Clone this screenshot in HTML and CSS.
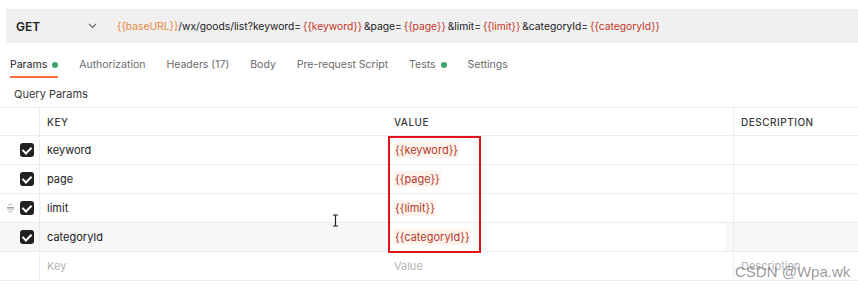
FILE: index.html
```html
<!DOCTYPE html>
<html lang="en">
<head>
    <meta charset="UTF-8">
    <title>Params</title>
    <link rel="stylesheet" href="styles.css">
</head>
<body>
    <div class="url-bar">
        <div class="method">
            <span>GET</span>
            <svg class="chevron" width="9" height="6" viewBox="0 0 9 6"><path d="M1 1l3.5 3.5L8 1" fill="none" stroke="#6b6b6b" stroke-width="1.1"/></svg>
        </div>
        <div class="url">
            <span class="var-base">{{baseURL}}</span>/wx/goods/list?keyword= <span class="var">{{keyword}}</span> &amp;page= <span class="var">{{page}}</span> &amp;limit= <span class="var">{{limit}}</span> &amp;categoryId= <span class="var">{{categoryId}}</span>
        </div>
    </div>

    <div class="tabs">
        <div class="tab active">Params <i class="dot"></i></div>
        <div class="tab">Authorization</div>
        <div class="tab">Headers (17)</div>
        <div class="tab">Body</div>
        <div class="tab">Pre-request Script</div>
        <div class="tab">Tests <i class="dot"></i></div>
        <div class="tab">Settings</div>
    </div>

    <div class="section-title">Query Params</div>

    <div class="params">
        <div class="row head">
            <div class="cell check"></div>
            <div class="cell key">KEY</div>
            <div class="cell value">VALUE</div>
            <div class="cell desc">DESCRIPTION</div>
        </div>
        <div class="row">
            <div class="cell check"><span class="box"></span></div>
            <div class="cell key">keyword</div>
            <div class="cell value"><span class="pill">{{keyword}}</span></div>
            <div class="cell desc"></div>
        </div>
        <div class="row">
            <div class="cell check"><span class="box"></span></div>
            <div class="cell key">page</div>
            <div class="cell value"><span class="pill">{{page}}</span></div>
            <div class="cell desc"></div>
        </div>
        <div class="row">
            <div class="cell check">
                <svg class="handle" width="9" height="10" viewBox="0 0 9 10"><path d="M1 4.5h7M1 6h7M2.5 2.5L4.5 1l2 1.5M2.5 8L4.5 9.5l2-1.5" fill="none" stroke="#9a9a9a" stroke-width="0.9"/></svg>
                <span class="box"></span>
            </div>
            <div class="cell key">limit</div>
            <div class="cell value"><span class="pill">{{limit}}</span></div>
            <div class="cell desc"></div>
        </div>
        <div class="row hover">
            <div class="cell check"><span class="box"></span></div>
            <div class="cell key">categoryId</div>
            <div class="cell value editing"><span class="pill">{{categoryId}}</span></div>
            <div class="cell desc"></div>
        </div>
        <div class="row">
            <div class="cell check"></div>
            <div class="cell key placeholder">Key</div>
            <div class="cell value placeholder">Value</div>
            <div class="cell desc placeholder">Description</div>
        </div>
        <div class="mark"></div>
        <svg class="ibeam" width="7" height="13" viewBox="0 0 7 13"><path d="M1 1h5M1 12h5M3.5 1v11" fill="none" stroke="#222" stroke-width="1.2"/></svg>
    </div>

    <div class="watermark">CSDN @Wpa.wk</div>
</body>
</html>
```

FILE: styles.css
```css
* { box-sizing: border-box; }
body {
    margin: 0;
    width: 858px;
    height: 287px;
    overflow: hidden;
    background: #ffffff;
    font-family: Inter, "Liberation Sans", sans-serif;
    color: #212121;
    position: relative;
}

.url-bar {
    display: flex;
    align-items: center;
    height: 34px;
    margin: 9px 0 0 6px;
    background: #f0f0f0;
}
.method {
    display: flex;
    align-items: center;
    justify-content: space-between;
    width: 99px;
    padding-left: 10px;
    font-size: 12px;
    font-weight: 600;
}
.chevron { margin-right: 8px; }
.url {
    padding-left: 12px;
    font-size: 10.3px;
    color: #212121;
    white-space: nowrap;
    word-spacing: -1px;
}
.url .var-base { color: #e8863b; }
.url .var { color: #c4362a; }

.tabs {
    display: flex;
    height: 35px;
    padding-left: 10px;
    gap: 21px;
}
.tab {
    position: relative;
    display: flex;
    align-items: center;
    height: 35px;
    padding-top: 8px;
    font-size: 10.5px;
    color: #6b6b6b;
}
.tab.active { color: #212121; }
.tab.active::after {
    content: "";
    position: absolute;
    left: 0;
    right: 0;
    bottom: 0;
    height: 2px;
    background: #ff6c37;
}
.dot {
    width: 6px;
    height: 6px;
    margin-left: 5px;
    border-radius: 50%;
    background: #3ea56a;
}

.section-title {
    padding: 9px 0 0 14px;
    height: 27px;
    font-size: 11px;
    color: #3a3a3a;
}

.params {
    position: relative;
    margin-top: 2px;
    border-top: 1px solid #f0f0f0;
}
.row {
    display: grid;
    grid-template-columns: 39px 347px 347px 1fr;
    height: 29px;
    border-bottom: 1px solid #ececec;
}
.row.head { height: 28px; }
.row.hover { background: #f7f7f7; }
.cell {
    display: flex;
    align-items: center;
    padding-left: 7px;
    font-size: 11px;
    border-left: 1px solid #ededed;
}
.cell.check {
    border-left: none;
    padding-left: 0;
    justify-content: flex-end;
    padding-right: 5px;
    gap: 5px;
}
.head .cell {
    font-size: 10px;
    letter-spacing: 0.5px;
    color: #3a3a3a;
    font-weight: 500;
}
.cell.value { border-left-color: transparent; }
.cell.value.editing { background: #ffffff; margin-right: 7px; }
.placeholder { color: #b3b3b3; }

.box {
    position: relative;
    width: 14px;
    height: 14px;
    border-radius: 3px;
    background: #212121;
}
.box::after {
    content: "";
    position: absolute;
    left: 4px;
    top: 2px;
    width: 4px;
    height: 7px;
    border: solid #ffffff;
    border-width: 0 2px 2px 0;
    transform: rotate(45deg);
}

.pill {
    padding: 1px 1px;
    border-radius: 2px;
    background: #fdf3ed;
    color: #b23a2c;
}

.mark {
    position: absolute;
    left: 388px;
    top: 28px;
    width: 93px;
    height: 117px;
    border: 2px solid #e3131b;
}
.ibeam {
    position: absolute;
    left: 332px;
    top: 106px;
}
.watermark {
    position: absolute;
    left: 735px;
    top: 263px;
    font-family: "Liberation Sans", sans-serif;
    font-size: 15px;
    color: rgba(120, 120, 120, 0.75);
}
```
